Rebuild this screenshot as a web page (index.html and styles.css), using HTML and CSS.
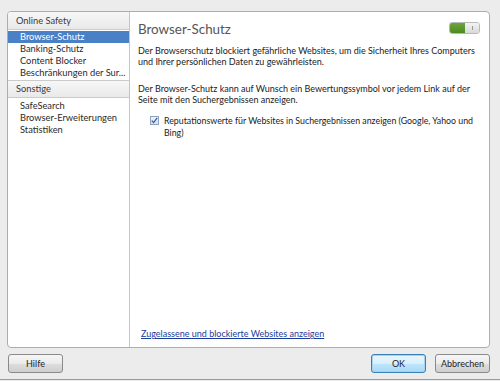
FILE: index.html
```html
<!DOCTYPE html>
<html lang="de">
<head>
    <meta charset="UTF-8">
    <meta name="viewport" content="width=device-width, initial-scale=1.0">
    <title>Browser-Schutz</title>
    <link rel="stylesheet" href="styles.css">
</head>
<body>
    <div class="window">
        <div class="panel">
            <div class="sidebar">
                <div class="group-title">Online Safety</div>
                <ul class="nav">
                    <li class="active">Browser-Schutz</li>
                    <li>Banking-Schutz</li>
                    <li>Content Blocker</li>
                    <li>Beschränkungen der Sur...</li>
                </ul>
                <div class="group-title second">Sonstige</div>
                <ul class="nav">
                    <li>SafeSearch</li>
                    <li>Browser-Erweiterungen</li>
                    <li>Statistiken</li>
                </ul>
            </div>

            <div class="content">
                <div class="content-header">
                    <h1>Browser-Schutz</h1>
                    <div class="toggle">
                        <span class="toggle-on"></span>
                        <span class="toggle-knob"></span>
                    </div>
                </div>

                <p class="intro">Der Browserschutz blockiert gefährliche Websites, um die Sicherheit Ihres Computers und Ihrer persönlichen Daten zu gewährleisten.</p>

                <p class="info">Der Browser-Schutz kann auf Wunsch ein Bewertungssymbol vor jedem Link auf der Seite mit den Suchergebnissen anzeigen.</p>

                <label class="check-row">
                    <span class="checkbox">
                        <svg width="7" height="7" viewBox="0 0 7 7">
                            <path d="M0.8 3.6 L2.6 5.6 L6.2 0.9" fill="none" stroke="#3b5f9a" stroke-width="1.3"/>
                        </svg>
                    </span>
                    <span>Reputationswerte für Websites in Suchergebnissen anzeigen (Google, Yahoo und Bing)</span>
                </label>

                <a class="site-link" href="#">Zugelassene und blockierte Websites anzeigen</a>
            </div>
        </div>

        <div class="footer">
            <button class="btn">Hilfe</button>
            <div class="footer-right">
                <button class="btn primary">OK</button>
                <button class="btn">Abbrechen</button>
            </div>
        </div>
    </div>
</body>
</html>
```

FILE: styles.css
```css
body {
    margin: 0;
    padding: 0;
    font-family: Lato, 'Open Sans', sans-serif;
    background-color: #ececec;
    color: #222;
}

.window {
    width: 500px;
    height: 380px;
    border-bottom: 1px solid #9a9a9a;
    padding: 11px 10px 0 7px;
    box-sizing: border-box;
    display: flex;
    flex-direction: column;
}

.panel {
    display: flex;
    height: 337px;
    background-color: white;
    border: 1px solid #adadad;
    border-radius: 4px;
    box-sizing: border-box;
    overflow: hidden;
}

.sidebar {
    width: 121px;
    flex-shrink: 0;
    border-right: 1px solid #c6c6c6;
}

.group-title {
    height: 17px;
    line-height: 17px;
    padding-left: 8px;
    font-size: 9.3px;
    color: #3a3a3a;
    background: linear-gradient(#f7f7f7, #e9e9e9);
    border-bottom: 1px solid #cbcbcb;
}

.group-title.second {
    border-top: 1px solid #cbcbcb;
    margin-top: 1px;
    height: 16px;
    line-height: 16px;
}

.nav {
    list-style: none;
    margin: 0;
    padding: 1px 0 0 0;
}

.group-title.second + .nav {
    padding-top: 2px;
}

.nav li {
    height: 12px;
    line-height: 12px;
    padding-left: 12px;
    font-size: 9.3px;
    color: #2a2a2a;
    white-space: nowrap;
}

.nav li.active {
    background-color: #4a80c6;
    color: white;
}

.content {
    flex: 1;
    display: flex;
    flex-direction: column;
    padding: 8px 9px 7px 8px;
}

.content-header {
    display: flex;
    justify-content: space-between;
    align-items: center;
    height: 18px;
}

.content-header h1 {
    margin: 0;
    font-size: 13.4px;
    font-weight: normal;
    color: #555;
}

.toggle {
    display: flex;
    width: 31px;
    height: 12px;
    border-radius: 3px;
    overflow: hidden;
    margin-top: -2px;
    border: 1px solid #b9b9b9;
    box-sizing: border-box;
}

.toggle-on {
    width: 15px;
    background: linear-gradient(#6aa73a, #4e8a22);
}

.toggle-knob {
    flex: 1;
    background: linear-gradient(#f4f4f4, #d9d9d9);
    position: relative;
}

.toggle-knob::after {
    content: "";
    position: absolute;
    left: 7px;
    top: 3px;
    width: 1px;
    height: 4px;
    background-color: #9a9a9a;
}

p {
    margin: 0;
    font-size: 9px;
    line-height: 10.5px;
}

.intro {
    margin-top: 8px;
}

.info {
    margin-top: 17px;
}

.check-row {
    display: flex;
    align-items: flex-start;
    margin-top: 10px;
    padding-left: 12px;
    font-size: 8.8px;
    line-height: 11.5px;
}

.checkbox {
    width: 9px;
    height: 9px;
    box-sizing: border-box;
    border: 1px solid #8fa3bf;
    background: linear-gradient(#eef3fa, #d6e1ef);
    margin: 1px 5px 0 0;
    flex-shrink: 0;
    display: flex;
    align-items: center;
    justify-content: center;
}

.site-link {
    margin-top: auto;
    font-size: 9px;
    line-height: 12px;
    color: #1c3c9c;
    padding-left: 3px;
}

.footer {
    display: flex;
    justify-content: space-between;
    padding: 6px 0 0 1px;
}

.footer-right {
    display: flex;
    gap: 9px;
}

.btn {
    width: 55px;
    height: 19px;
    padding: 0;
    font-family: Lato, 'Open Sans', sans-serif;
    font-size: 9px;
    color: #222;
    background: linear-gradient(#f6f6f6 0%, #ebebeb 50%, #dddddd 51%, #cfcfcf 100%);
    border: 1px solid #8a8a8a;
    border-radius: 3px;
}

.btn.primary {
    border-color: #3c7fb1;
    background: linear-gradient(#eaf6fd 0%, #d9f0fc 50%, #bee6fd 51%, #a7d9f5 100%);
    box-shadow: 0 0 0 1px #a5d3ef inset;
}
```
